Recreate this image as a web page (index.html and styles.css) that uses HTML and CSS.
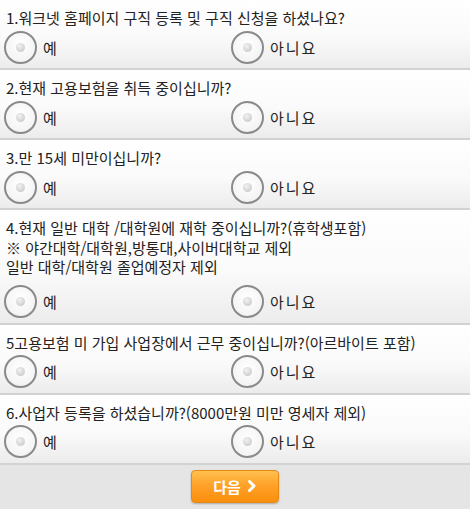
FILE: index.html
```html
<!DOCTYPE html>
<html lang="ko">
<head>
    <meta charset="UTF-8">
    <meta name="viewport" content="width=device-width, initial-scale=1.0">
    <title>구직 신청 자격 확인</title>
    <link rel="stylesheet" href="styles.css">
</head>
<body>
    <form class="survey">
        <div class="question">
            <p class="q-title">1.워크넷 홈페이지 구직 등록 및 구직 신청을 하셨나요?</p>
            <div class="answers">
                <label class="choice"><input type="radio" name="q1"><span class="radio"></span><span class="yes">예</span></label>
                <label class="choice"><input type="radio" name="q1"><span class="radio"></span><span class="no">아니요</span></label>
            </div>
        </div>
        <div class="question">
            <p class="q-title">2.현재 고용보험을 취득 중이십니까?</p>
            <div class="answers">
                <label class="choice"><input type="radio" name="q2"><span class="radio"></span><span class="yes">예</span></label>
                <label class="choice"><input type="radio" name="q2"><span class="radio"></span><span class="no">아니요</span></label>
            </div>
        </div>
        <div class="question">
            <p class="q-title">3.만 15세 미만이십니까?</p>
            <div class="answers">
                <label class="choice"><input type="radio" name="q3"><span class="radio"></span><span class="yes">예</span></label>
                <label class="choice"><input type="radio" name="q3"><span class="radio"></span><span class="no">아니요</span></label>
            </div>
        </div>
        <div class="question long">
            <p class="q-title">4.현재 일반 대학 /대학원에 재학 중이십니까?(휴학생포함)<br>※ 야간대학/대학원,방통대,사이버대학교 제외<br>일반 대학/대학원 졸업예정자 제외</p>
            <div class="answers">
                <label class="choice"><input type="radio" name="q4"><span class="radio"></span><span class="yes">예</span></label>
                <label class="choice"><input type="radio" name="q4"><span class="radio"></span><span class="no">아니요</span></label>
            </div>
        </div>
        <div class="question">
            <p class="q-title">5고용보험 미 가입 사업장에서 근무 중이십니까?(아르바이트 포함)</p>
            <div class="answers">
                <label class="choice"><input type="radio" name="q5"><span class="radio"></span><span class="yes">예</span></label>
                <label class="choice"><input type="radio" name="q5"><span class="radio"></span><span class="no">아니요</span></label>
            </div>
        </div>
        <div class="question">
            <p class="q-title">6.사업자 등록을 하셨습니까?(8000만원 미만 영세자 제외)</p>
            <div class="answers">
                <label class="choice"><input type="radio" name="q6"><span class="radio"></span><span class="yes">예</span></label>
                <label class="choice"><input type="radio" name="q6"><span class="radio"></span><span class="no">아니요</span></label>
            </div>
        </div>
        <div class="footer">
            <button type="button" class="next-btn">다음
                <svg class="chev" width="10" height="12" viewBox="0 0 10 12"><path d="M2.5 1.5 L7 6 L2.5 10.5" fill="none" stroke="#fff" stroke-width="3" stroke-linecap="round" stroke-linejoin="round"/></svg>
            </button>
        </div>
    </form>
</body>
</html>
```

FILE: styles.css
```css
body {
    margin: 0;
    padding: 0;
    background: #fff;
    font-family: "Noto Sans CJK KR", "Noto Sans", sans-serif;
    color: #222;
}
.survey {
    display: flex;
    flex-direction: column;
    width: 470px;
}
.question {
    padding: 8px 0 5px 0;
    background: linear-gradient(to bottom, #ffffff 0%, #fafafa 55%, #ececec 100%);
    border-bottom: 2px solid #d2d2d2;
}
.q-title {
    margin: 0 0 0 6px;
    font-size: 15px;
    line-height: 19px;
}
.long .q-title {
    line-height: 19.5px;
}
.answers {
    display: grid;
    grid-template-columns: 227px 227px;
    padding-left: 4px;
    margin-top: 4px;
}
.long .answers {
    margin-top: 9px;
}
.choice {
    display: flex;
    align-items: center;
    height: 32px;
    cursor: pointer;
}
.choice input {
    display: none;
}
.radio {
    box-sizing: border-box;
    width: 33px;
    height: 33px;
    border-radius: 50%;
    border: 2px solid #8a8a8a;
    background: radial-gradient(circle at 50% 40%, #ffffff 0%, #f4f4f4 70%, #e4e4e4 100%);
    display: flex;
    align-items: center;
    justify-content: center;
}
.radio::after {
    content: "";
    width: 9px;
    height: 9px;
    border-radius: 50%;
    background: radial-gradient(circle at 40% 35%, #f2f2f2 0%, #cfcfcf 70%, #b8b8b8 100%);
}
.choice input:checked + .radio::after {
    background: #555;
}
.yes, .no {
    font-size: 15px;
    margin-left: 6px;
}
.no {
    letter-spacing: 2px;
}
.footer {
    background: #e5e5e5;
    height: 44px;
    display: flex;
    justify-content: center;
    align-items: center;
}
.next-btn {
    width: 88px;
    height: 33px;
    margin-top: -1px;
    border: 1px solid #e88a10;
    border-radius: 4px;
    background: linear-gradient(to bottom, #ffc050 0%, #ffa22a 45%, #f98e0c 100%);
    box-shadow: 0 1px 2px rgba(0, 0, 0, 0.25);
    color: #fff;
    font-family: "Noto Sans CJK KR", sans-serif;
    font-size: 15px;
    font-weight: bold;
    display: flex;
    align-items: center;
    justify-content: center;
    gap: 6px;
    padding: 0;
    cursor: pointer;
}
```
